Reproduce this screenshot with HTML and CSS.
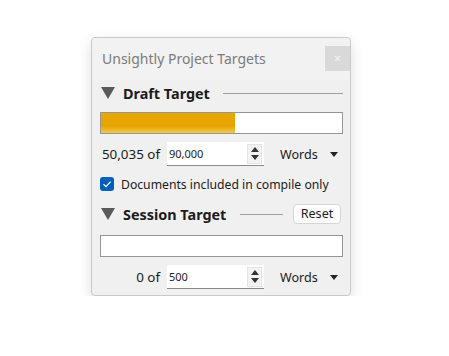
FILE: index.html
```html
<!DOCTYPE html>
<html>
<head>
<meta charset="utf-8">
<link rel="stylesheet" href="styles.css">
</head>
<body>
<div class="window">
  <div class="titlebar">
    <span class="title">Unsightly Project Targets</span>
    <span class="close">×</span>
  </div>
  <div class="content">
    <div class="header">
      <span class="tri"></span>
      <span class="htext">Draft Target</span>
      <span class="rule"></span>
    </div>
    <div class="bar"><div class="fill" style="width:55.6%"></div></div>
    <div class="spinrow">
      <span class="lbl">50,035 of</span>
      <div class="spin"><span class="val">90,000</span><span class="arrows"><span class="up"></span><span class="dn"></span></span></div>
      <span class="unit">Words</span>
      <span class="dd"></span>
    </div>
    <div class="checkrow">
      <span class="check"><svg width="10" height="10" viewBox="0 0 10 10"><path d="M1.5 5.2 L4 7.6 L8.6 2.6" fill="none" stroke="#fff" stroke-width="1.3"/></svg></span>
      <span>Documents included in compile only</span>
    </div>
    <div class="header session">
      <span class="tri"></span>
      <span class="htext">Session Target</span>
      <span class="rule short"></span>
      <span class="reset">Reset</span>
    </div>
    <div class="bar"></div>
    <div class="spinrow">
      <span class="lbl">0 of</span>
      <div class="spin"><span class="val">500</span><span class="arrows"><span class="up"></span><span class="dn"></span></span></div>
      <span class="unit">Words</span>
      <span class="dd"></span>
    </div>
  </div>
</div>
</body>
</html>
```
FILE: styles.css
```css
html, body { margin: 0; padding: 0; background: #fff; }
body {
  font-family: "Noto Sans", "Open Sans", sans-serif;
  font-size: 12.2px;
  color: #1b1b1b;
  padding: 37px 0 0 91px;
}
.window {
  width: 258px;
  height: 257px;
  border: 1px solid #c9c9c9;
  border-radius: 4px;
  background: #f0f0f0;
  box-shadow: 0 5px 14px rgba(0,0,0,0.13);
  display: flex;
  flex-direction: column;
}
.titlebar {
  height: 42px;
  box-sizing: border-box;
  padding: 8px 0 0 10px;
  display: flex;
  align-items: flex-start;
  background: #f2f2f2;
  border-radius: 4px 4px 0 0;
}
.title {
  flex: 1;
  color: #7b7b7b;
  font-size: 14px;
  line-height: 25px;
}
.close {
  width: 25px;
  height: 25px;
  background: #d9d9d9;
  color: #f4f4f4;
  font-size: 13px;
  line-height: 24px;
  text-align: center;
}
.content {
  padding: 0 7px 6px 8px;
  display: flex;
  flex-direction: column;
}
.header {
  height: 26px;
  display: flex;
  align-items: center;
}
.tri {
  width: 0; height: 0;
  border-left: 7px solid transparent;
  border-right: 7px solid transparent;
  border-top: 12px solid #5a5a5a;
  margin: 0 8px 0 1px;
}
.htext { font-weight: bold; font-size: 14.4px; }
.rule {
  flex: 1;
  height: 1px;
  background: #a0a0a0;
  margin: 0 0 0 13px;
}
.rule.short { flex: 0 0 43px; margin-left: 14px; }
.reset {
  margin-left: auto;
  margin-right: 2px;
  width: 48px;
  height: 20px;
  box-sizing: border-box;
  border: 1px solid #d5d5d5;
  border-radius: 4px;
  background: #fdfdfd;
  text-align: center;
  line-height: 18px;
  font-size: 12.6px;
}
.session { margin-top: 5px; }
.bar {
  margin-top: 6px;
  height: 22px;
  box-sizing: border-box;
  border: 1px solid #959595;
  background: #fff;
  display: flex;
}
.bar + .spinrow, .session + .bar { margin-top: 8px; }
.fill {
  height: 100%;
  background: linear-gradient(#e9a800, #e6a400 65%, #f2c850);
}
.spinrow {
  height: 24px;
  display: flex;
  align-items: center;
}
.lbl {
  width: 60px;
  text-align: right;
  margin-right: 7px;
  font-size: 13.4px;
  white-space: nowrap;
}
.spin {
  width: 97px;
  height: 24px;
  box-sizing: border-box;
  background: #fff;
  border-bottom: 1px solid #8a8a8a;
  display: flex;
  align-items: center;
  padding-left: 2px;
}
.val { flex: 1; font-size: 11px; color: #1b1b1b; }
.arrows {
  width: 15px;
  height: 20px;
  margin-right: 2px;
  background: #f3f3f3;
  border: 1px solid #e4e4e4;
  box-sizing: border-box;
  display: flex;
  flex-direction: column;
  align-items: center;
  justify-content: center;
  gap: 3px;
}
.up, .dn { width: 0; height: 0; border-left: 4px solid transparent; border-right: 4px solid transparent; }
.up { border-bottom: 5px solid #333; }
.dn { border-top: 5px solid #333; }
.unit { margin-left: 16px; width: 50px; font-size: 12.6px; }
.dd {
  width: 0; height: 0;
  border-left: 4.5px solid transparent;
  border-right: 4.5px solid transparent;
  border-top: 5px solid #222;
}
.checkrow {
  margin-top: 6px;
  height: 24px;
  display: flex;
  align-items: center;
}
.check {
  width: 14px;
  height: 14px;
  border-radius: 3px;
  background: #005fb8;
  display: flex;
  align-items: center;
  justify-content: center;
  margin-right: 7px;
}
.check svg { display: block; }
```
